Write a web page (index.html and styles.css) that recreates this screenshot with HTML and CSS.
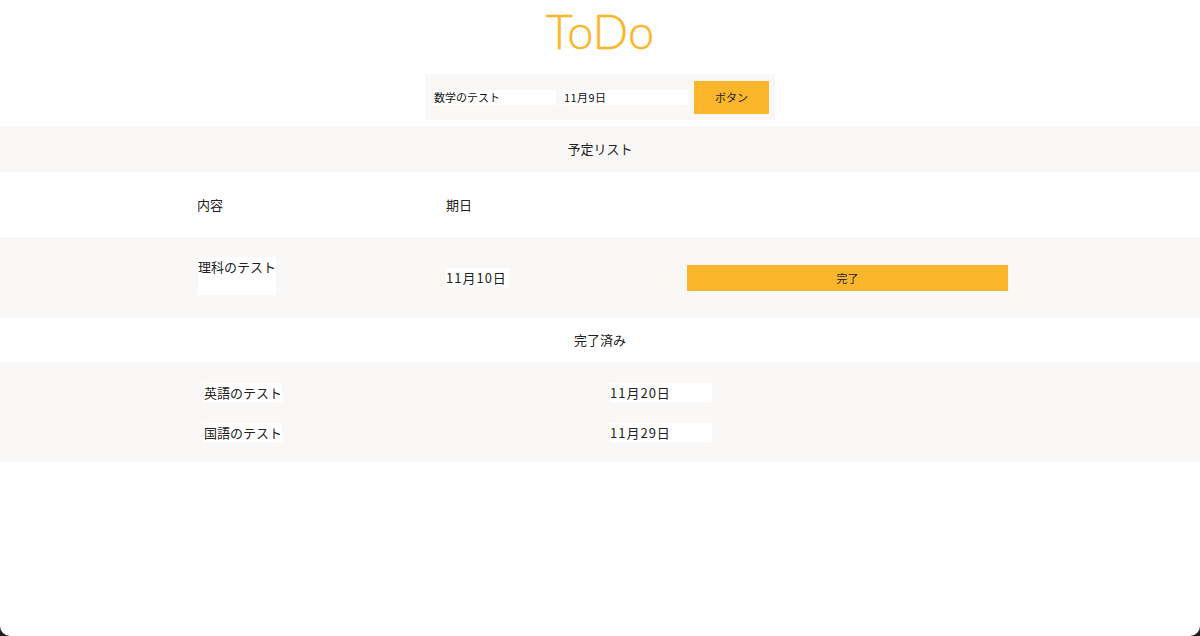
FILE: index.html
```html
<!DOCTYPE html>
<html lang="ja">
<head>
  <meta charset="utf-8">
  <title>ToDo</title>
  <link rel="stylesheet" href="styles.css">
</head>
<body>
<div class="page">
  <h1 class="title">ToDo</h1>

  <div class="add-form">
    <input class="field" type="text" value="数学のテスト">
    <input class="field" type="text" value="11月9日">
    <button class="add-btn">ボタン</button>
  </div>

  <div class="band gray">予定リスト</div>

  <div class="todo-head">
    <div>内容</div>
    <div>期日</div>
  </div>
  <div class="todo-row">
    <div class="todo-text">理科のテスト</div>
    <div class="todo-date"><span>11月10日</span></div>
    <div class="todo-action"><button class="done-btn">完了</button></div>
  </div>

  <div class="band">完了済み</div>

  <div class="done-list">
    <div class="done-row">
      <span class="done-text">英語のテスト</span>
      <span class="done-date">11月20日</span>
    </div>
    <div class="done-row">
      <span class="done-text">国語のテスト</span>
      <span class="done-date">11月29日</span>
    </div>
  </div>
</div>
</body>
</html>
```

FILE: styles.css
```css
html {
    background-color: #1c1c1c;
}

body {
    margin: 0;
    font-family: "Noto Sans CJK JP", "Noto Sans", sans-serif;
    color: #222;
}

.page {
    min-height: 100vh;
    background-color: #fff;
    border-radius: 0 0 10px 10px;
    overflow: hidden;
}

.title {
    margin: 0;
    height: 74px;
    text-align: center;
    font-family: Lato, "Open Sans", sans-serif;
    font-weight: 300;
    font-size: 47px;
    line-height: 62px;
    color: #fbb62b;
    -webkit-text-stroke: 0.4px #fbb62b;
}

.add-form {
    width: 350px;
    height: 46px;
    margin: 0 auto;
    box-sizing: border-box;
    padding: 6px 6px 6px 8px;
    background-color: #f9f8f6;

    display: flex;
    align-items: center;
    gap: 7px;
}

.field {
    width: 123px;
    height: 15px;
    box-sizing: border-box;
    border: none;
    outline: none;
    padding: 0 1px;
    background-color: #fff;
    font-family: inherit;
    font-size: 11px;
    color: #111;
}

.field + .field {
    width: 126px;
    letter-spacing: 0.4px;
}

.add-btn {
    margin-left: -2px;
    width: 75px;
    height: 33px;
    border: none;
    background-color: #fbb62b;
    font-family: inherit;
    font-size: 11px;
    color: #222;
}

.band {
    height: 44px;
    line-height: 44px;
    text-align: center;
    font-size: 13px;
}

.band.gray {
    margin-top: 6px;
    height: 46px;
    line-height: 46px;
    background-color: #f9f8f6;
}

.todo-head,
.todo-row {
    display: grid;
    grid-template-columns: 249px 241px 321px;
    padding-left: 197px;
    font-size: 13px;
}

.todo-head {
    height: 65px;
    align-items: center;
}

.todo-row {
    height: 81px;
    align-items: center;
    background-color: #f9f8f6;
}

.todo-text {
    width: 78px;
    height: 38px;
    margin-left: 1px;
    margin-top: -4px;
    background-color: #fff;
    line-height: 19px;
}

.todo-date span {
    background-color: #fff;
    padding-right: 2px;
    letter-spacing: 1px;
}

.done-btn {
    display: block;
    width: 321px;
    height: 26px;
    border: none;
    background-color: #fbb62b;
    font-family: inherit;
    font-size: 11px;
    color: #222;
}

.done-list {
    background-color: #f9f8f6;
    padding: 21px 0 20px 204px;
}

.done-row {
    display: flex;
    height: 19px;
    line-height: 19px;
    font-size: 13px;
}

.done-row + .done-row {
    margin-top: 21px;
}

.done-text {
    width: 78px;
    background-color: #fff;
}

.done-date {
    margin-left: 328px;
    width: 102px;
    background-color: #fff;
    letter-spacing: 1px;
}
```
